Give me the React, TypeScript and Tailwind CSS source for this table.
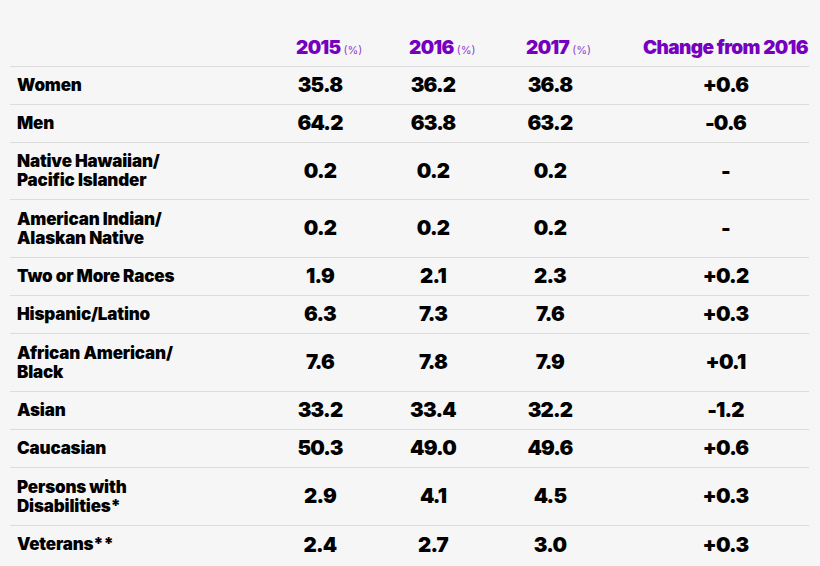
const rows: { label: string[]; v: string[] }[] = [
  { label: ["Women"], v: ["35.8", "36.2", "36.8", "+0.6"] },
  { label: ["Men"], v: ["64.2", "63.8", "63.2", "-0.6"] },
  { label: ["Native Hawaiian/", "Pacific Islander"], v: ["0.2", "0.2", "0.2", "-"] },
  { label: ["American Indian/", "Alaskan Native"], v: ["0.2", "0.2", "0.2", "-"] },
  { label: ["Two or More Races"], v: ["1.9", "2.1", "2.3", "+0.2"] },
  { label: ["Hispanic/Latino"], v: ["6.3", "7.3", "7.6", "+0.3"] },
  { label: ["African American/", "Black"], v: ["7.6", "7.8", "7.9", "+0.1"] },
  { label: ["Asian"], v: ["33.2", "33.4", "32.2", "-1.2"] },
  { label: ["Caucasian"], v: ["50.3", "49.0", "49.6", "+0.6"] },
  { label: ["Persons with", "Disabilities*"], v: ["2.9", "4.1", "4.5", "+0.3"] },
  { label: ["Veterans**"], v: ["2.4", "2.7", "3.0", "+0.3"] },
];

const cols = "grid grid-cols-[250px_120px_106px_128px_1fr]";

export default function App() {
  return (
    <div
      className="w-[820px] h-[566px] bg-[#f6f6f6] overflow-hidden pl-[10px] pr-[11px] text-black"
      style={{ fontFamily: "Inter, 'Liberation Sans', sans-serif" }}
    >
      {/* header */}
      <div className={`${cols} h-[66.5px] items-end pb-[9px] border-b border-[#dcdcdc] text-[#7500c0] font-black tracking-[-0.04em]`}>
        <div />
        <div className="pl-[36px] text-[19px] leading-none">
          2015<span className="text-[11px] font-normal ml-[3px] text-[#8f3fd0] tracking-normal">(%)</span>
        </div>
        <div className="pl-[29px] text-[19px] leading-none">
          2016<span className="text-[11px] font-normal ml-[3px] text-[#8f3fd0] tracking-normal">(%)</span>
        </div>
        <div className="pl-[40px] text-[19px] leading-none">
          2017<span className="text-[11px] font-normal ml-[3px] text-[#8f3fd0] tracking-normal">(%)</span>
        </div>
        <div className="pl-[28px] text-center text-[19px] leading-none tracking-[-0.03em]">Change from 2016</div>
      </div>

      {rows.map((r, i) => (
        <div
          key={i}
          className={`${cols} items-center ${r.label.length > 1 ? "h-[57.4px]" : "h-[38.3px]"} ${i < rows.length - 1 ? "border-b border-[#dcdcdc]" : ""}`}
        >
          <div className="pl-[7px] text-[17px] font-black leading-[19px] tracking-[-0.01em]">
            {r.label.map((l) => (
              <div key={l}>{l}</div>
            ))}
          </div>
          {r.v.slice(0, 3).map((n, j) => (
            <div key={j} className="text-center text-[20.5px] font-black tracking-[-0.04em]">
              {n}
            </div>
          ))}
          <div className="pl-[28px] text-center text-[20.5px] font-black tracking-[-0.04em]">{r.v[3]}</div>
        </div>
      ))}
    </div>
  );
}
